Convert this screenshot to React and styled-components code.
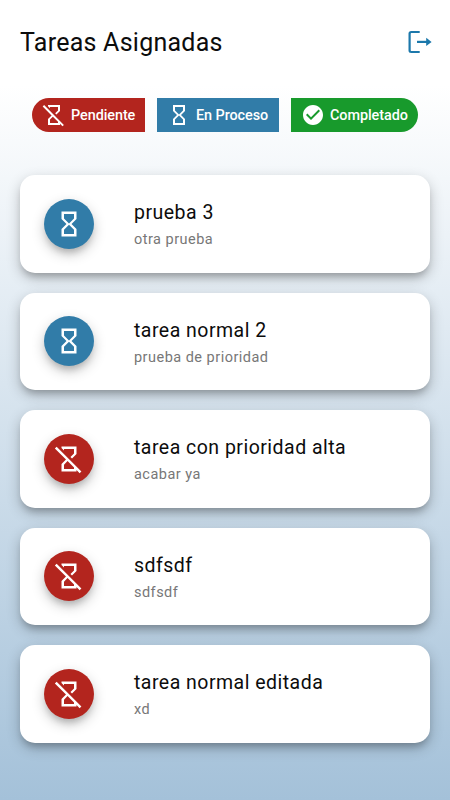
import React from "react";
import styled, { createGlobalStyle } from "styled-components";

const GlobalStyle = createGlobalStyle`
  * { box-sizing: border-box; }
  body { margin: 0; font-family: Roboto, "Liberation Sans", sans-serif; }
  h1, h2, p, ul { margin: 0; padding: 0; font-weight: 400; }
`;

const colors = { pending: "#b3251e", progress: "#317ca8", done: "#189a2c" };

const Screen = styled.div`
  width: 450px;
  height: 800px;
  overflow: hidden;
  background: linear-gradient(180deg, #ffffff 85px, #a4c1d9 800px);
`;

const Header = styled.header`
  height: 85px;
  padding: 0 17px 0 20px;
  display: flex;
  align-items: center;
  justify-content: space-between;
`;

const Title = styled.h1`
  font-size: 25px;
  line-height: 30px;
  letter-spacing: 0.25px;
  color: #0c0c0c;
  white-space: nowrap;
`;

const LogoutButton = styled.button`
  display: flex;
  padding: 0 0 1px;
  border: 0;
  background: none;
`;

const Legend = styled.div`
  display: flex;
  gap: 12px;
  padding: 12.5px 32px 0;
`;

const Chip = styled.div`
  display: flex;
  align-items: center;
  flex: none;
  gap: 5px;
  width: ${({ $width }) => $width}px;
  height: 34.5px;
  padding-left: 10px;
  border-radius: ${({ $radius }) => $radius};
  background: ${({ $status }) => colors[$status]};
  color: #fff;
  font-size: 14.4px;
  font-weight: 500;
  letter-spacing: -0.06px;
  white-space: nowrap;
`;

const ChipLabel = styled.span`
  padding-top: 1.5px;
`;

const TaskList = styled.ul`
  display: flex;
  flex-direction: column;
  gap: 20px;
  padding: 43px 20px 0;
  list-style: none;
`;

const Card = styled.li`
  display: flex;
  align-items: center;
  gap: 40.4px;
  height: 97.5px;
  padding-left: 23.6px;
  border-radius: 15px;
  background: #fff;
  box-shadow: 0 6px 7px -3px rgba(0, 0, 0, 0.2), 0 5px 14px rgba(0, 0, 0, 0.23);
`;

const Avatar = styled.div`
  display: flex;
  align-items: center;
  justify-content: center;
  flex: none;
  width: 50px;
  height: 50px;
  border-radius: 50%;
  background: ${({ $status }) => colors[$status]};
  box-shadow: 0 6px 7px -3px rgba(0, 0, 0, 0.18), 0 5px 13px rgba(0, 0, 0, 0.22);
`;

const TaskText = styled.div`
  padding-top: 4px;
`;

const TaskName = styled.h2`
  font-size: 19.5px;
  line-height: 26px;
  letter-spacing: 0.48px;
  color: #0c0c0c;
`;

const TaskNote = styled.p`
  margin-top: 3px;
  font-size: 14.5px;
  line-height: 22px;
  letter-spacing: 0.48px;
  color: #777777;
`;

const Icon = styled.svg`
  display: block;
  flex: none;
  width: ${({ $size }) => $size}px;
  height: ${({ $size }) => $size}px;
  fill: #fff;
`;

const iconPaths = {
  pending:
    "M8 4h8v3.5l-2.84 2.84 1.25 1.25L18 8.01 17.99 8H18V2H6v1.17l2 2V4zM2.1 2.1.69 3.51l8.9 8.9L6 16l.01.01H6V22h12v-1.17l2.49 2.49 1.41-1.41L2.1 2.1zM16 20H8v-3.5l2.84-2.84L16 18.83V20z",
  progress:
    "M6 2v6h.01L6 8.01 10 12l-4 4 .01.01H6V22h12v-5.99h-.01L18 16l-4-4 4-3.99-.01-.01H18V2H6zm10 14.5V20H8v-3.5l4-4 4 4zm-4-5l-4-4V4h8v3.5l-4 4z",
  done:
    "M12 2C6.48 2 2 6.48 2 12s4.48 10 10 10 10-4.48 10-10S17.52 2 12 2zm-2 15l-5-5 1.41-1.41L10 14.17l7.59-7.59L19 8l-9 9z",
};

function StatusIcon({ status, size }) {
  return (
    <Icon $size={size} viewBox="0 0 24 24" aria-hidden="true">
      <path d={iconPaths[status]} />
    </Icon>
  );
}

const legend = [
  { status: "pending", label: "Pendiente", width: 113, radius: "17.5px 0 0 17.5px" },
  { status: "progress", label: "En Proceso", width: 122, radius: "0" },
  { status: "done", label: "Completado", width: 127, radius: "0 17.5px 17.5px 0" },
];

const tasks = [
  { status: "progress", name: "prueba 3", note: "otra prueba" },
  { status: "progress", name: "tarea normal 2", note: "prueba de prioridad" },
  { status: "pending", name: "tarea con prioridad alta", note: "acabar ya" },
  { status: "pending", name: "sdfsdf", note: "sdfsdf" },
  { status: "pending", name: "tarea normal editada", note: "xd" },
];

export default function App() {
  return (
    <Screen>
      <GlobalStyle />
      <Header>
        <Title>Tareas Asignadas</Title>
        <LogoutButton aria-label="Salir">
          <svg width="26" height="26" viewBox="0 0 26 26" fill="none" stroke="#1c78ab" strokeWidth="2.2">
            <path d="M12.7 3H4.2Q2.6 3 2.6 4.4V21.6Q2.6 23 4.2 23H12.7" />
            <path d="M10 12.9H21" />
            <path d="M19.2 8.8L24.6 12.9L19.2 17Z" fill="#1c78ab" stroke="none" />
          </svg>
        </LogoutButton>
      </Header>
      <Legend>
        {legend.map(({ status, label, width, radius }) => (
          <Chip key={status} $status={status} $width={width} $radius={radius}>
            <StatusIcon status={status} size={24} />
            <ChipLabel>{label}</ChipLabel>
          </Chip>
        ))}
      </Legend>
      <TaskList>
        {tasks.map(({ status, name, note }) => (
          <Card key={name}>
            <Avatar $status={status}>
              <StatusIcon status={status} size={30} />
            </Avatar>
            <TaskText>
              <TaskName>{name}</TaskName>
              <TaskNote>{note}</TaskNote>
            </TaskText>
          </Card>
        ))}
      </TaskList>
    </Screen>
  );
}
